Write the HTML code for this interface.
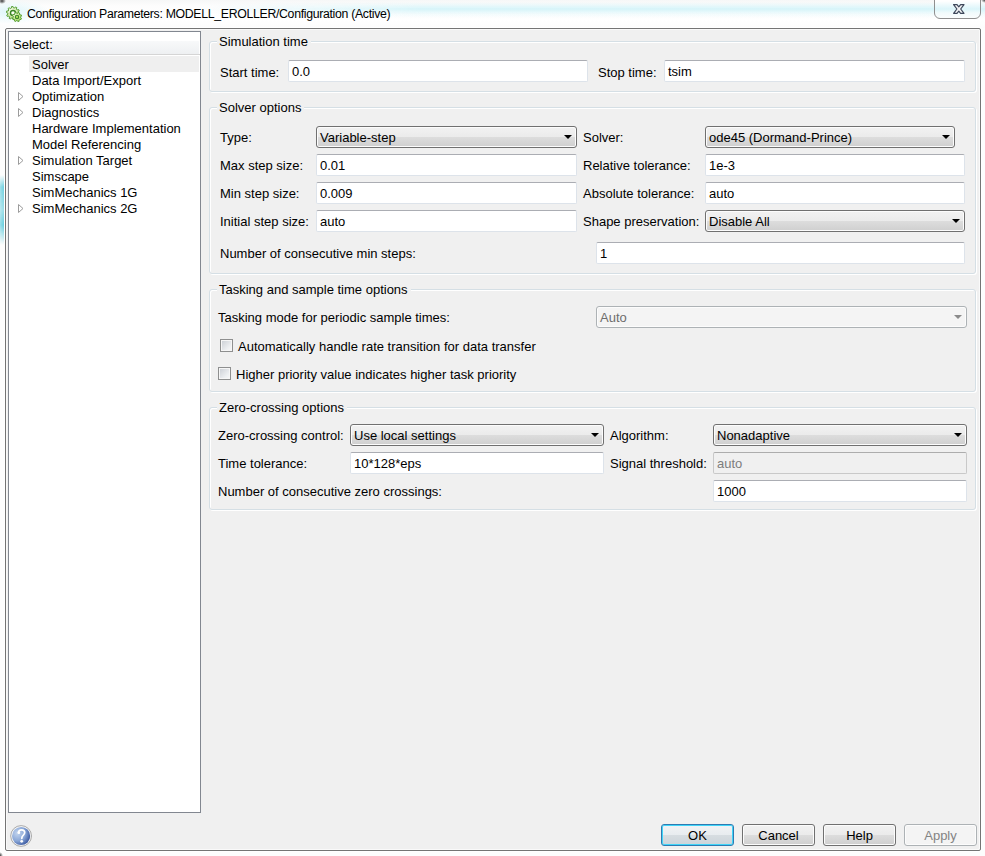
<!DOCTYPE html>
<html><head><meta charset="utf-8">
<style>
*{margin:0;padding:0;box-sizing:border-box}
html,body{width:985px;height:856px;overflow:hidden;background:#fdfdfd}
body{position:relative;font-family:"Liberation Sans",sans-serif;font-size:13px;color:#000}
.a{position:absolute;white-space:nowrap}
.t{position:absolute;white-space:nowrap;line-height:16px;height:16px;margin-top:1px}
#title{left:27px;top:7px;font-size:12.3px;letter-spacing:-0.32px;color:#000}
#client{left:5px;top:28px;width:976px;height:823px;background:#f0f0f0;border:1px solid #747474;border-radius:2px;box-shadow:inset 1px 1px 0 #f9f9f9,inset -1px -1px 0 #fafafa,0 0 0 1px #fff}
#tree{left:8px;top:31px;width:193px;height:782px;background:#fff;border:1px solid #828790}
.grp{position:absolute;border:1px solid #d5dfe5;border-radius:3px;box-shadow:1px 1px 0 #fff inset, 1px 1px 0 #fff}
.gl{position:absolute;background:#f0f0f0;padding:0 3px 0 2px;line-height:16px;margin-top:1px}
.fld{position:absolute;height:22px;background:#fff;border:1px solid #dde3ea;border-top-color:#abadb3;border-radius:2px;line-height:22px;padding-left:3px}
.cmb{position:absolute;height:22px;border:1px solid #707070;border-radius:3px;background:linear-gradient(#f2f2f2 0,#ebebeb 50%,#dddddd 50%,#cfcfcf 100%);line-height:22px;padding-left:3px;box-shadow:inset 0 0 0 1px #fcfcfc}
.arr{position:absolute;width:0;height:0;border-left:4px solid transparent;border-right:4px solid transparent;border-top:4px solid #000}
.btn{position:absolute;top:824px;width:73px;height:22px;border:1px solid #707070;border-radius:3px;background:linear-gradient(#f2f2f2 0,#ebebeb 50%,#dddddd 50%,#cfcfcf 100%);text-align:center;line-height:22px;box-shadow:inset 0 0 0 1px #fcfcfc}
.chk{position:absolute;width:13px;height:13px;border:1px solid #8e8f8f;background:linear-gradient(135deg,#c9cdd3,#eef0f2 70%,#f8f8f8);box-shadow:inset 0 0 0 1px #f6f6f6}
</style></head><body>
<div class="a" id="tbar" style="left:0;top:0;width:985px;height:28px;background:linear-gradient(#f6f7f7 0,#fdfdfd 6px,#ffffff 20px,#fcfcfc 28px)"></div>
<div class="a" style="left:200px;top:0;width:785px;height:20px;background:linear-gradient(rgba(214,244,249,0) 2px,rgba(214,244,249,1) 9px,rgba(214,244,249,0.3) 14px,rgba(214,244,249,0) 18px);-webkit-mask-image:linear-gradient(to right,transparent 0,#000 220px,#000 100%)"></div>
<div class="a" style="left:0;top:0;width:60px;height:28px;background:radial-gradient(ellipse 40px 12px at 10px 12px,rgba(214,244,249,0.8),rgba(214,244,249,0))"></div>
<div class="a" style="left:0;top:175px;width:5px;height:70px;background:linear-gradient(rgba(70,195,215,0) 0,rgba(70,195,215,0.85) 12px,rgba(70,195,215,0.6) 35px,rgba(70,195,215,0.9) 50px,rgba(70,195,215,0) 70px);-webkit-mask-image:linear-gradient(to right,rgba(0,0,0,0.6),#000)"></div>
<svg class="a" style="left:6px;top:6px" width="18" height="18" viewBox="0 0 18 18">
 <defs><radialGradient id="gg" cx="0.35" cy="0.3" r="0.75"><stop offset="0" stop-color="#f6fbe9"/><stop offset="0.55" stop-color="#d6ebb0"/><stop offset="1" stop-color="#8cc45a"/></radialGradient>
 <radialGradient id="gg2" cx="0.3" cy="0.3" r="0.8"><stop offset="0" stop-color="#eef8d8"/><stop offset="0.6" stop-color="#c3e58a"/><stop offset="1" stop-color="#9ad25a"/></radialGradient></defs>
 <path d="M12.20 7.00 L13.58 7.50 L13.28 9.04 L11.81 8.97 L11.21 10.06 L12.03 11.27 L10.88 12.34 L9.73 11.43 L8.61 11.95 L8.56 13.41 L7.00 13.60 L6.61 12.19 L5.39 11.95 L4.49 13.11 L3.12 12.34 L3.64 10.96 L2.79 10.06 L1.38 10.47 L0.72 9.04 L1.95 8.23 L1.80 7.00 L0.42 6.50 L0.72 4.96 L2.19 5.03 L2.79 3.94 L1.97 2.73 L3.12 1.66 L4.27 2.57 L5.39 2.05 L5.44 0.59 L7.00 0.40 L7.39 1.81 L8.61 2.05 L9.51 0.89 L10.88 1.66 L10.36 3.04 L11.21 3.94 L12.62 3.53 L13.28 4.96 L12.05 5.77 Z" fill="url(#gg)" stroke="#4f9a2e" stroke-width="0.9" stroke-linejoin="round"/>
 <circle cx="7" cy="7" r="2.5" fill="#fbfdf6" stroke="#3a8424" stroke-width="1.4"/>
 <path d="M14.63 11.74 L15.50 12.36 L14.90 13.63 L13.86 13.35 L13.04 14.08 L13.22 15.14 L11.90 15.61 L11.36 14.68 L10.26 14.63 L9.64 15.50 L8.37 14.90 L8.65 13.86 L7.92 13.04 L6.86 13.22 L6.39 11.90 L7.32 11.36 L7.37 10.26 L6.50 9.64 L7.10 8.37 L8.14 8.65 L8.96 7.92 L8.78 6.86 L10.10 6.39 L10.64 7.32 L11.74 7.37 L12.36 6.50 L13.63 7.10 L13.35 8.14 L14.08 8.96 L15.14 8.78 L15.61 10.10 L14.68 10.64 Z" fill="url(#gg2)" stroke="#4f9a2e" stroke-width="0.9" stroke-linejoin="round"/>
 <circle cx="11" cy="11" r="1.7" fill="#a9dc5c" stroke="#3a8424" stroke-width="1.1"/>
</svg>
<div class="a" id="title">Configuration Parameters: MODELL_EROLLER/Configuration (Active)</div>
<div class="a" style="left:934px;top:-3px;width:47px;height:22px;border:1px solid #8f8f8f;border-radius:0 0 6px 6px;background:linear-gradient(#ffffff 3px,#dbf5fa 11px,#f2fbfc 15px,#fbfdfd 100%)"></div>
<svg class="a" style="left:952px;top:3px" width="14" height="13" viewBox="0 0 14 13">
 <path d="M1.6 1.6 H5 L6.8 3.9 L8.6 1.6 H12 L8.7 6 L12 10.3 H8.6 L6.8 8.1 L5 10.3 H1.6 L4.9 6 Z" fill="#f2f3f5" stroke="#3d475a" stroke-width="1.2" stroke-linejoin="round"/>
</svg>
<div class="a" id="client"></div>
<div class="a" id="tree"></div>

<!-- tree contents -->
<div class="a" style="left:9px;top:41px;width:190px;height:13px;background:linear-gradient(#f8f9fa,#eef0f2)"></div>
<div class="a" style="left:9px;top:54px;width:191px;height:1px;background:#d5d5d5"></div>
<div class="t" style="left:13px;top:36px">Select:</div>
<div class="a" style="left:29px;top:56px;width:170px;height:16px;background:#efefef"></div>
<div class="t" style="left:32px;top:56px">Solver</div>
<div class="t" style="left:32px;top:72px">Data Import/Export</div>
<div class="t" style="left:32px;top:88px">Optimization</div>
<div class="t" style="left:32px;top:104px">Diagnostics</div>
<div class="t" style="left:32px;top:120px">Hardware Implementation</div>
<div class="t" style="left:32px;top:136px">Model Referencing</div>
<div class="t" style="left:32px;top:152px">Simulation Target</div>
<div class="t" style="left:32px;top:168px">Simscape</div>
<div class="t" style="left:32px;top:184px">SimMechanics 1G</div>
<div class="t" style="left:32px;top:200px">SimMechanics 2G</div>
<svg class="a" style="left:0;top:0" width="30" height="230">
 <g fill="none" stroke="#9c9c9c" stroke-width="1">
 <path d="M18.5 92.5 L18.5 100.5 L23 96.5 Z"/>
 <path d="M18.5 108.5 L18.5 116.5 L23 112.5 Z"/>
 <path d="M18.5 156.5 L18.5 164.5 L23 160.5 Z"/>
 <path d="M18.5 204.5 L18.5 212.5 L23 208.5 Z"/>
 </g>
</svg>

<!-- group 1 -->
<div class="grp" style="left:209px;top:41px;width:767px;height:51px"></div>
<div class="gl" style="left:217px;top:33px">Simulation time</div>
<div class="t" style="left:220px;top:64px">Start time:</div>
<div class="fld" style="left:288px;top:60px;width:300px">0.0</div>
<div class="t" style="left:598px;top:64px">Stop time:</div>
<div class="fld" style="left:664px;top:60px;width:301px">tsim</div>

<!-- group 2 -->
<div class="grp" style="left:209px;top:107px;width:767px;height:167px"></div>
<div class="gl" style="left:217px;top:99px">Solver options</div>
<div class="t" style="left:220px;top:129px">Type:</div>
<div class="cmb" style="left:316px;top:126px;width:261px">Variable-step<span class="arr" style="left:247px;top:8px"></span></div>
<div class="t" style="left:583px;top:129px">Solver:</div>
<div class="cmb" style="left:705px;top:126px;width:250px">ode45 (Dormand-Prince)<span class="arr" style="left:236px;top:8px"></span></div>
<div class="t" style="left:220px;top:157px">Max step size:</div>
<div class="fld" style="left:316px;top:154px;width:261px">0.01</div>
<div class="t" style="left:583px;top:157px">Relative tolerance:</div>
<div class="fld" style="left:705px;top:154px;width:260px">1e-3</div>
<div class="t" style="left:220px;top:185px">Min step size:</div>
<div class="fld" style="left:316px;top:182px;width:261px">0.009</div>
<div class="t" style="left:583px;top:185px">Absolute tolerance:</div>
<div class="fld" style="left:705px;top:182px;width:260px">auto</div>
<div class="t" style="left:220px;top:213px">Initial step size:</div>
<div class="fld" style="left:316px;top:210px;width:261px">auto</div>
<div class="t" style="left:583px;top:213px">Shape preservation:</div>
<div class="cmb" style="left:705px;top:210px;width:260px">Disable All<span class="arr" style="left:246px;top:8px"></span></div>
<div class="t" style="left:220px;top:245px">Number of consecutive min steps:</div>
<div class="fld" style="left:596px;top:242px;width:369px">1</div>

<!-- group 3 -->
<div class="grp" style="left:209px;top:289px;width:767px;height:103px"></div>
<div class="gl" style="left:217px;top:281px">Tasking and sample time options</div>
<div class="t" style="left:218px;top:309px">Tasking mode for periodic sample times:</div>
<div class="cmb dis" style="left:596px;top:306px;width:371px;border-color:#adb2b5;background:#f4f4f4;color:#6d6d6d">Auto<span class="arr" style="left:357px;top:8px;border-top-color:#8a8a8a"></span></div>
<div class="chk" style="left:220px;top:339px"></div>
<div class="t" style="left:238px;top:338px">Automatically handle rate transition for data transfer</div>
<div class="chk" style="left:218px;top:367px"></div>
<div class="t" style="left:236px;top:366px">Higher priority value indicates higher task priority</div>

<!-- group 4 -->
<div class="grp" style="left:209px;top:407px;width:767px;height:103px"></div>
<div class="gl" style="left:217px;top:399px">Zero-crossing options</div>
<div class="t" style="left:218px;top:427px">Zero-crossing control:</div>
<div class="cmb" style="left:350px;top:424px;width:254px">Use local settings<span class="arr" style="left:240px;top:8px"></span></div>
<div class="t" style="left:610px;top:427px">Algorithm:</div>
<div class="cmb" style="left:713px;top:424px;width:254px">Nonadaptive<span class="arr" style="left:240px;top:8px"></span></div>
<div class="t" style="left:218px;top:455px">Time tolerance:</div>
<div class="fld" style="left:350px;top:452px;width:254px">10*128*eps</div>
<div class="t" style="left:610px;top:455px">Signal threshold:</div>
<div class="fld" style="left:713px;top:452px;width:254px;background:#f0f0f0;border-color:#c9c9c9;border-top-color:#adadad;color:#7d7d7d">auto</div>
<div class="t" style="left:218px;top:483px">Number of consecutive zero crossings:</div>
<div class="fld" style="left:713px;top:480px;width:254px">1000</div>

<!-- help icon -->
<svg class="a" style="left:10px;top:825px" width="23" height="23" viewBox="0 0 23 23">
 <defs><radialGradient id="hg" cx="0.3" cy="0.35" r="0.85"><stop offset="0" stop-color="#c2d4ee"/><stop offset="0.5" stop-color="#89a6d6"/><stop offset="1" stop-color="#213f8e"/></radialGradient></defs>
 <circle cx="11.1" cy="11" r="10.4" fill="#f7f7f7" stroke="#a9a9a9" stroke-width="1"/>
 <circle cx="11.1" cy="11" r="9.1" fill="url(#hg)"/>
 <path d="M8.4 7.6 C8.6 5.6 10 4.8 11.6 4.8 C13.5 4.8 14.7 6 14.7 7.5 C14.7 9.4 12.9 10.2 12.1 11.8 L11.8 13.4" fill="none" stroke="#fff" stroke-width="1.7" stroke-linecap="round"/>
 <circle cx="8.9" cy="7.7" r="1.3" fill="#fff"/>
 <circle cx="11.7" cy="16.3" r="1.4" fill="#fff"/>
</svg>

<!-- buttons -->
<div class="btn" style="left:661px;border-color:#2e7bb2;box-shadow:inset 0 0 0 1px #40d4f8;background:linear-gradient(#f1f3f5 0,#e8ecef 50%,#d7dde1 50%,#ccd4da 100%)">OK</div>
<div class="btn" style="left:742px">Cancel</div>
<div class="btn" style="left:823px">Help</div>
<div class="btn" style="left:904px;border-color:#adb2b5;background:#f4f4f4;color:#838383">Apply</div>
<div class="a" style="left:-2px;top:-2px;width:8px;height:6px;border-radius:50%;background:radial-gradient(rgba(40,40,40,0.9),rgba(40,40,40,0) 70%)"></div>
<div class="a" style="left:981px;top:-3px;width:8px;height:6px;border-radius:50%;background:radial-gradient(rgba(40,40,40,0.9),rgba(40,40,40,0) 70%)"></div>
<div class="a" style="left:-3px;top:852px;width:6px;height:7px;border-radius:50%;background:radial-gradient(rgba(40,40,40,0.9),rgba(40,40,40,0) 70%)"></div>
</body></html>
